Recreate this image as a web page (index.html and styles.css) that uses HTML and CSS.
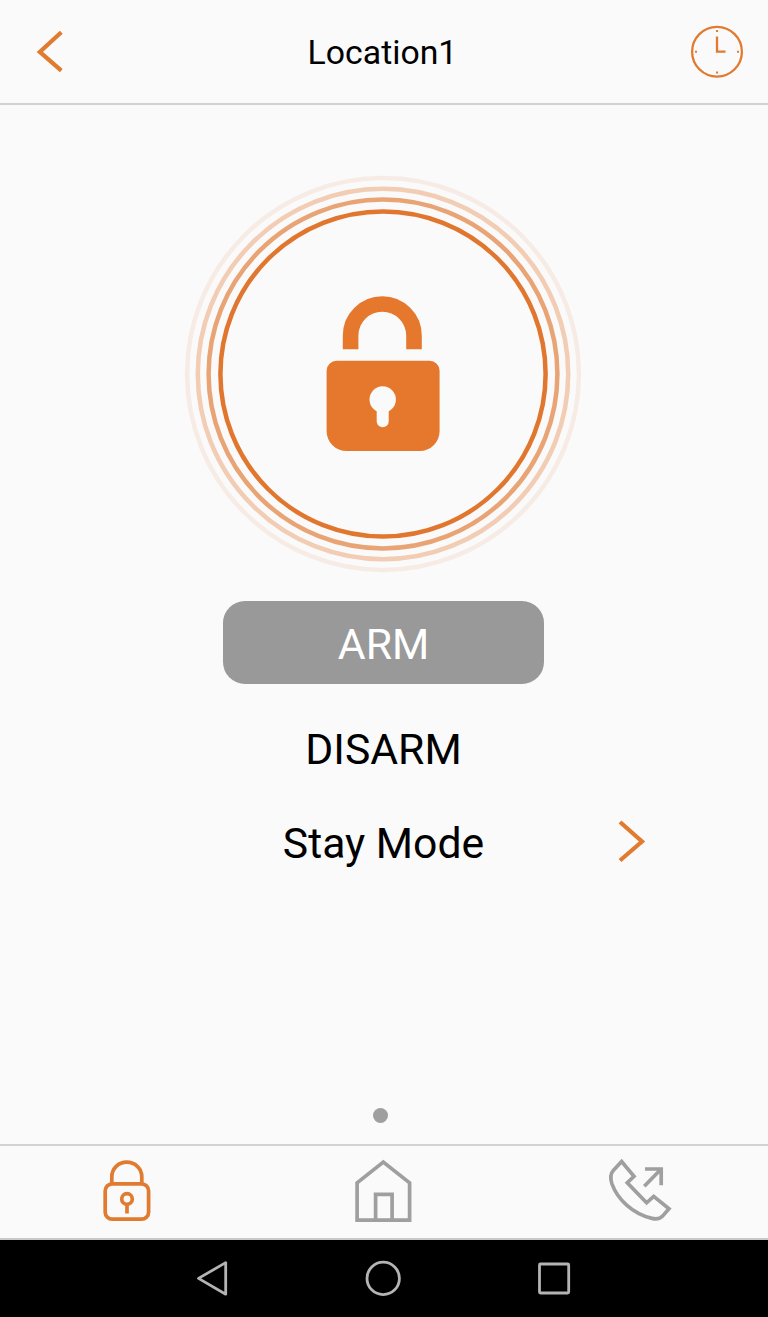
FILE: index.html
```html
<!DOCTYPE html>
<html lang="en">
<head>
  <meta charset="UTF-8">
  <meta name="viewport" content="width=device-width, initial-scale=1">
  <title>Location1</title>
  <link rel="stylesheet" href="styles.css">
</head>

<body>

<header class="topbar">
  <a class="back" href="#" aria-label="Back">
    <svg class="line" width="32" height="48" viewBox="0 0 32 48">
      <path d="M27.3 4.2L5.8 23.9L27.3 42.7"></path>
    </svg>
  </a>
  <h1>Location1</h1>
  <a class="history" href="#" aria-label="History">
    <svg class="clock" width="54" height="54" viewBox="0 0 54 54">
      <circle cx="27" cy="26.7" r="24.9"></circle>
      <path d="M27 11.5V26.7H35.5"></path>
      <path class="tick" d="M26 6h2M26 47.5h2M5 26.7h2M47 26.7h2"></path>
    </svg>
  </a>
</header>

<main>
  <svg class="status" width="400" height="400" viewBox="-200 -200 400 400" role="img" aria-label="Unlocked">
    <g class="rings">
      <circle r="162.6"></circle>
      <circle r="174.4" opacity=".65"></circle>
      <circle r="185.2" opacity=".35"></circle>
      <circle r="195.9" opacity=".1"></circle>
    </g>
    <path class="shackle" d="M-32.4-24.7V-38.3A31.7 31.7 0 0 1 31-38.3V-24.7"></path>
    <path class="body" d="M-46.4-13.2H46.6A10 10 0 0 1 56.6-3.2V57A20 20 0 0 1 36.6 77H-36.4A20 20 0 0 1-56.4 57V-3.2A10 10 0 0 1-46.4-13.2z"></path>
    <circle class="hole" cx="-.3" cy="25.5" r="13.2"></circle>
    <rect class="hole" x="-6.3" y="28" width="12" height="25.2" rx="6"></rect>
  </svg>

  <button class="mode active">ARM</button>
  <button class="mode">DISARM</button>
  <div class="row">
    <button class="mode">Stay Mode</button>
    <svg class="line" width="32" height="48" viewBox="0 0 32 48">
      <path d="M5 5L27 24.5L5 43.5"></path>
    </svg>
  </div>

  <div class="pager"><span class="dot"></span></div>
</main>

<nav class="tabs">
  <a class="on" href="#" aria-label="Security">
    <svg width="72" height="72" viewBox="0 0 72 72">
      <rect x="13.2" y="27.8" width="43.4" height="35.4" rx="7"></rect>
      <path d="M19.8 27.5V21C19.8 12.3 26.5 6.2 34.7 6.2S49.8 12.3 49.8 21V27.5"></path>
      <circle cx="35" cy="43" r="5.3"></circle>
      <path d="M35 48.5V57.5"></path>
    </svg>
  </a>
  <a href="#" aria-label="Home">
    <svg width="72" height="72" viewBox="0 0 72 72">
      <path d="M9.1 64.2V26.8L35.3 6L61.6 26.8V64.2zM27.6 64V38.3H44.1V64"></path>
    </svg>
  </a>
  <a href="#" aria-label="Calls">
    <svg width="72" height="72" viewBox="0 0 72 72">
      <path d="M17.6 5.5L30 20.4L23.3 26.7L42.6 46.8L49.7 40.4L65 52.7L59 59.6C56 63 52.5 63.5 48 62.4C29 58 13.5 43.5 8 28C6.2 22.5 6 18 9.5 14.3z"></path>
      <path d="M41 13H57.2V29.2M57.2 13L40.3 30.3"></path>
    </svg>
  </a>
</nav>

<footer class="sysbar">
  <svg width="40" height="40" viewBox="0 0 40 40"><path d="M5.5 20.4L32.7 4.6V36.2z"></path></svg>
  <svg width="40" height="40" viewBox="0 0 40 40"><circle cx="19.2" cy="20.4" r="16.2"></circle></svg>
  <svg width="40" height="40" viewBox="0 0 40 40"><rect x="4.5" y="6" width="29.2" height="29" rx="1"></rect></svg>
</footer>

</body>
</html>
```
FILE: styles.css
```css
* {
  box-sizing: border-box;
  margin: 0;
  padding: 0;
}

body {
  display: flex;
  flex-direction: column;
  height: 1317px;
  background: #fafafa;
  color: #000;
  font-family: Roboto, sans-serif;
}

svg {
  display: block;
  fill: none;
}

.topbar {
  display: grid;
  grid-template-columns: 1fr auto 1fr;
  align-items: center;
  height: 105px;
  padding: 0 24px 0 34px;
  border-bottom: 2px solid #d2d2d2;
}

h1 {
  font-size: 33.8px;
  font-weight: 400;
  line-height: 40px;
  padding: 3px 13px 0 0;
}

.history {
  justify-self: end;
}

.line {
  stroke: #e07b30;
  stroke-width: 4.2px;
}

.clock {
  stroke: #e07b30;
  stroke-width: 2.3px;
}

.tick {
  stroke-width: 2px;
}

main {
  display: flex;
  flex: 1;
  flex-direction: column;
  align-items: center;
  padding: 69px 1px 0 0;
}

.status {
  margin-right: 1px;
}

.rings {
  stroke: #e1762e;
  stroke-width: 4.5px;
}

.shackle {
  stroke: #e6782e;
  stroke-width: 15.6px;
}

.body {
  fill: #e6782e;
}

.hole {
  fill: #fafafa;
}

.mode {
  height: 83px;
  padding-top: 3px;
  border: 0;
  background: none;
  color: inherit;
  font: 400 42.7px/80px Roboto, sans-serif;
}

.active {
  width: 321px;
  margin: 27px 0 22px;
  border-radius: 22px;
  background: #999;
  color: #fff;
}

.row {
  display: grid;
  grid-template-columns: 1fr auto 1fr;
  align-items: center;
  width: 526px;
  margin-top: 11px;
}

.row .mode {
  grid-column: 2;
}

.row .line {
  justify-self: end;
  margin-bottom: 1px;
}

.pager {
  margin-top: auto;
  padding: 0 7px 21px 0;
}

.dot {
  display: block;
  width: 15px;
  height: 15px;
  border-radius: 50%;
  background: #9f9f9f;
}

.tabs {
  display: grid;
  grid-template-columns: repeat(3, 1fr);
  place-items: center;
  height: 96px;
  border-top: 2px solid #d2d2d2;
  border-bottom: 2px solid #c8c8c8;
  stroke: #9f9f9f;
  stroke-width: 3.7px;
}

.on {
  stroke: #e07b30;
}

.sysbar {
  display: flex;
  justify-content: center;
  gap: 131px;
  height: 77px;
  padding-top: 18px;
  background: #000;
  stroke: #b4b4b4;
  stroke-width: 2.8px;
  stroke-linejoin: round;
}
```
